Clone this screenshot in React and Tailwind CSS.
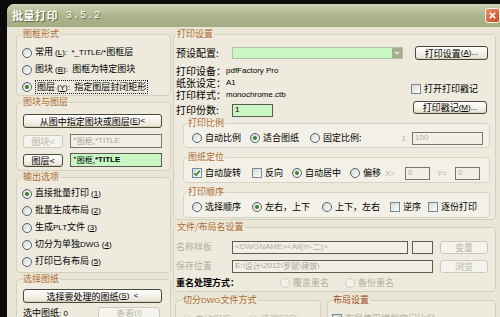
import React from "react";

const L = ({ children, className = "" }) => (
  <span className={`font-['Liberation_Sans',sans-serif] text-[8px] ${className}`}>{children}</span>
);

function Radio({ checked, disabled }) {
  return (
    <span
      className={`flex w-[10px] h-[10px] shrink-0 items-center justify-center rounded-full border ${
        disabled ? "border-[#d3d0c2] bg-[#f3f2ec]" : "border-[#4d6277] bg-gradient-to-br from-[#d6d6cc] to-[#ffffff]"
      }`}
    >
      {checked ? <span className="w-[4px] h-[4px] rounded-full bg-[#3d7f2a]" /> : null}
    </span>
  );
}

function Check({ checked }) {
  return (
    <span className="flex w-[10px] h-[10px] shrink-0 items-center justify-center border border-[#6f8aa3] bg-gradient-to-br from-[#d6d6cc] to-[#ffffff]">
      {checked ? (
        <svg viewBox="0 0 8 8" className="w-[8px] h-[8px]">
          <path d="M1.2 4.2 L3.2 6.2 L6.8 1.8" stroke="#2f7a21" strokeWidth="1.5" fill="none" />
        </svg>
      ) : null}
    </span>
  );
}

function Btn({ children, className = "", disabled }) {
  return (
    <div
      className={`flex items-center justify-center rounded-[3px] border whitespace-nowrap text-[9px] leading-none ${
        disabled
          ? "border-[#cdc9b9] text-[#b8b4a3] bg-[#f4f3ee]"
          : "border-[#4a4838] text-black bg-gradient-to-b from-[#ffffff] to-[#e7e4d3] shadow-[inset_0_-1px_0_#d8d2ba]"
      } ${className}`}
    >
      {children}
    </div>
  );
}

function Box({ children, className = "" }) {
  return (
    <div className={`flex items-center h-[13px] border border-[#5d5b4d] px-[2px] overflow-hidden whitespace-nowrap text-[8px] ${className}`}>
      {children}
    </div>
  );
}

function RadioRow({ checked, disabled, children, className = "" }) {
  return (
    <div className={`flex items-center gap-[3px] whitespace-nowrap ${className}`}>
      <Radio checked={checked} disabled={disabled} />
      <span className={disabled ? "text-[#b4b0a0]" : ""}>{children}</span>
    </div>
  );
}

function CheckRow({ checked, children, className = "" }) {
  return (
    <div className={`flex items-center gap-[3px] whitespace-nowrap ${className}`}>
      <Check checked={checked} />
      <span>{children}</span>
    </div>
  );
}

function TitleBar() {
  return (
    <div className="h-[23px] shrink-0 flex items-center pl-[5px] rounded-tl-[7px] bg-gradient-to-b from-[#cbd1b2] via-[#adb68d] to-[#a2ab82]">
      <span className="text-white text-[11px] font-bold leading-none tracking-[0.5px] [text-shadow:1px_1px_1px_#59623f]">
        批量打印
      </span>
      <span className="ml-[8px] text-white text-[10px] leading-none font-['Liberation_Mono',monospace] tracking-[1px] [text-shadow:1px_1px_1px_#59623f]">
        3.5.2
      </span>
      <div className="ml-auto w-[15px] h-[15px] rounded-[3px] border border-[#f3efe6] bg-gradient-to-br from-[#eb9670] to-[#c4461c] flex items-center justify-center">
        <svg viewBox="0 0 10 10" className="w-[9px] h-[9px]">
          <path d="M2 2 L8 8 M8 2 L2 8" stroke="#ffffff" strokeWidth="1.8" />
        </svg>
      </div>
    </div>
  );
}

const legendCls = "leading-[12px] text-[#ad6b33] px-[1px]";

function LeftCol() {
  return (
    <div className="w-[155px] flex flex-col">
      <fieldset className="min-w-0 h-[68px] border border-[#d3d0be] rounded-[4px] bg-[#eeebde] pl-[5px]">
        <legend className={legendCls}>图框形式</legend>
        <div className="mt-[4px] flex flex-col">
          <RadioRow className="h-[17px]">
            常用 <L>(<u>L</u>):&nbsp; *_TITLE/*</L>图框层
          </RadioRow>
          <RadioRow className="h-[17px]">
            图块 <L>(<u>B</u>):&nbsp;</L> 图框为特定图块
          </RadioRow>
          <div className="flex items-center gap-[3px] h-[17px] whitespace-nowrap">
            <Radio checked />
            <span className="border border-dotted border-[#222] px-[1px] leading-[11px]">
              图层 <L>(<u>Y</u>):&nbsp;</L> 指定图层封闭矩形
            </span>
          </div>
        </div>
      </fieldset>

      <fieldset className="min-w-0 h-[75px] border border-[#d3d0be] rounded-[4px] bg-[#eeebde] pl-[5px]">
        <legend className={legendCls}>图块与图层</legend>
        <Btn className="mt-[6px] ml-[1px] w-[139px] h-[14px]">
          从图中指定图块或图层 <L>(<u>E</u>)&lt;</L>
        </Btn>
        <div className="mt-[6px] ml-[1px] flex items-center h-[14px]">
          <Btn disabled className="w-[40px] h-[13px]">图块&lt;</Btn>
          <Box className="ml-[7px] w-[92px] h-[14px] bg-[#f1efe6] text-[#a9a596] border-[#77766a]">
            *图框, <L>*TITLE</L>
          </Box>
        </div>
        <div className="mt-[5px] ml-[1px] flex items-center h-[14px]">
          <Btn className="w-[40px] h-[13px]">图层&lt;</Btn>
          <Box className="ml-[7px] w-[92px] h-[14px] bg-[#c8f6c4]">
            *图框, <L className="font-bold">*TITLE</L>
          </Box>
        </div>
      </fieldset>

      <fieldset className="min-w-0 h-[102px] border border-[#d3d0be] rounded-[4px] bg-[#eeebde] pl-[5px]">
        <legend className={legendCls}>输出选项</legend>
        <div className="mt-[2px] flex flex-col">
          <RadioRow checked className="h-[17px]">
            直接批量打印 <L>(<u>1</u>)</L>
          </RadioRow>
          <RadioRow className="h-[17px]">
            批量生成布局 <L>(<u>2</u>)</L>
          </RadioRow>
          <RadioRow className="h-[17px]">
            生成<L>PLT</L>文件 <L>(<u>3</u>)</L>
          </RadioRow>
          <RadioRow className="h-[17px]">
            切分为单独<L>DWG (<u>4</u>)</L>
          </RadioRow>
          <RadioRow className="h-[17px]">
            打印已有布局 <L>(<u>5</u>)</L>
          </RadioRow>
        </div>
      </fieldset>

      <fieldset className="min-w-0 h-[50px] border border-[#d3d0be] rounded-[4px] bg-[#eeebde] pl-[5px]">
        <legend className={legendCls}>选择图纸</legend>
        <Btn className="mt-[4px] ml-[1px] w-[139px] h-[14px]">
          选择要处理的图纸 <L>(<u>S</u>)&nbsp; &lt;</L>
        </Btn>
        <div className="mt-[3px] ml-[1px] flex items-center h-[14px]">
          <span className="w-[75px]">
            选中图纸<L>: 0</L>
          </span>
          <Btn disabled className="w-[62px] h-[13px]">
            查看 <L>(I)</L>
          </Btn>
        </div>
      </fieldset>
    </div>
  );
}

function RightCol() {
  return (
    <div className="ml-[2px] w-[323px] flex flex-col">
      <fieldset className="min-w-0 h-[192px] border border-[#d3d0be] rounded-[4px] bg-[#eeebde] pl-[2px]">
        <legend className={legendCls}>打印设置</legend>
        <div className="mt-[6px] flex items-center h-[14px]">
          <span className="w-[56px] text-[10px]">预设配置:</span>
          <div className="w-[171px] h-[12px] bg-[#c9f6c2] border border-[#b2c2a4] flex items-center justify-end">
            <span className="w-[10px] h-[10px] bg-[#a7ae8b] flex items-center justify-center">
              <svg viewBox="0 0 8 8" className="w-[6px] h-[6px]">
                <path d="M1.5 2.5 L4 5 L6.5 2.5" stroke="#ffffff" strokeWidth="1.4" fill="none" />
              </svg>
            </span>
          </div>
          <Btn className="ml-[12px] w-[73px] h-[14px]">
            打印设置 <L>(<u>A</u>)...</L>
          </Btn>
        </div>
        <div className="flex">
          <div className="w-[235px] flex flex-col mt-[5px]">
            <div className="h-[12px] flex items-center text-[10px]">
              打印设备：<L className="text-[8.5px]">pdfFactory Pro</L>
            </div>
            <div className="h-[12px] flex items-center text-[10px]">
              纸张设定：<L className="text-[8.5px]">A1</L>
            </div>
            <div className="h-[12px] flex items-center text-[10px]">
              打印样式：<L className="text-[8.5px]">monochrome.ctb</L>
            </div>
            <div className="mt-[2px] h-[14px] flex items-center">
              <span className="w-[56px] text-[10px]">打印份数:</span>
              <Box className="w-[41px] h-[12px] bg-[#c8f6c4]">
                <L>1</L>
              </Box>
            </div>
          </div>
          <div className="flex flex-col">
            <CheckRow className="mt-[23px] h-[12px]">打开打印戳记</CheckRow>
            <Btn className="mt-[6px] ml-[2px] w-[74px] h-[13px]">
              打印戳记 <L>(<u>M</u>)...</L>
            </Btn>
          </div>
        </div>

        <fieldset className="min-w-0 ml-[7px] w-[307px] h-[31px] border border-[#d6d3c3] rounded-[4px] bg-[#f3f1e7] pl-[3px]">
          <legend className={legendCls}>打印比例</legend>
          <div className="mt-[2px] ml-[5px] flex items-center h-[14px]">
            <RadioRow className="w-[58px]">自动比例</RadioRow>
            <RadioRow checked className="w-[60px]">适合图纸</RadioRow>
            <RadioRow className="w-[88px]">固定比例:</RadioRow>
            <span className="w-[14px] text-right pr-[6px] text-[#b4b0a0]">
              <L>1</L>
            </span>
            <Box className="w-[71px] h-[13px] bg-[#f1efe6] text-[#b4b0a0] border-[#77766a]">
              <L>100</L>
            </Box>
          </div>
        </fieldset>

        <fieldset className="min-w-0 mt-[3px] ml-[7px] w-[307px] h-[32px] border border-[#d6d3c3] rounded-[4px] bg-[#f3f1e7] pl-[3px]">
          <legend className={legendCls}>图纸定位</legend>
          <div className="mt-[3px] ml-[5px] flex items-center h-[14px]">
            <CheckRow checked className="w-[60px]">自动旋转</CheckRow>
            <CheckRow className="w-[40px]">反向</CheckRow>
            <RadioRow checked className="w-[58px]">自动居中</RadioRow>
            <RadioRow className="w-[33px]">偏移</RadioRow>
            <span className="w-[22px] pl-[2px] text-[#b4b0a0]">
              <L>X=</L>
            </span>
            <Box className="w-[25px] h-[13px] bg-[#f1efe6] text-[#b4b0a0] border-[#77766a]">
              <L>0</L>
            </Box>
            <span className="w-[25px] pl-[7px] text-[#b4b0a0]">
              <L>Y=</L>
            </span>
            <Box className="w-[25px] h-[13px] bg-[#f1efe6] text-[#b4b0a0] border-[#77766a]">
              <L>0</L>
            </Box>
          </div>
        </fieldset>

        <fieldset className="min-w-0 mt-[3px] ml-[7px] w-[307px] h-[32px] border border-[#d6d3c3] rounded-[4px] bg-[#f3f1e7] pl-[3px]">
          <legend className={legendCls}>打印顺序</legend>
          <div className="mt-[2px] ml-[5px] flex items-center h-[14px]">
            <RadioRow className="w-[60px]">选择顺序</RadioRow>
            <RadioRow checked className="w-[70px]">左右，上下</RadioRow>
            <RadioRow className="w-[68px]">上下，左右</RadioRow>
            <CheckRow className="w-[38px]">逆序</CheckRow>
            <CheckRow>逐份打印</CheckRow>
          </div>
        </fieldset>
      </fieldset>

      <fieldset className="min-w-0 mt-[1px] h-[71px] border border-[#d3d0be] rounded-[4px] bg-[#eeebde] pl-[2px]">
        <legend className={legendCls}>文件/布局名设置</legend>
        <div className="mt-[7px] flex items-center h-[14px]">
          <span className="w-[56px] text-[#b4b0a0]">名称样板</span>
          <Box className="w-[176px] h-[12px] bg-[#f1efe6] text-[#b4b0a0]">
            <L>&lt;DWGNAME&gt;&lt;All(m-</L>二<L>)&gt;</L>
          </Box>
          <Box className="ml-[4px] w-[21px] h-[13px] bg-[#f1efe6]" />
          <Btn disabled className="ml-[7px] w-[48px] h-[13px]">变量</Btn>
        </div>
        <div className="mt-[5px] flex items-center h-[14px]">
          <span className="w-[56px] text-[#b4b0a0]">保存位置</span>
          <Box className="w-[201px] h-[12px] bg-[#f1efe6] text-[#a9a596]">
            <L>E:\</L>设计<L>\2012\</L>罗斌<L>\</L>建筑<L>\</L>
          </Box>
          <Btn disabled className="ml-[7px] w-[48px] h-[13px]">浏览</Btn>
        </div>
        <div className="mt-[4px] flex items-center h-[12px]">
          <span className="w-[104px] font-bold">重名处理方式：</span>
          <RadioRow disabled className="w-[65px]">覆盖重名</RadioRow>
          <RadioRow disabled>备份重名</RadioRow>
        </div>
      </fieldset>

      <div className="mt-[2px] flex">
        <fieldset className="min-w-0 ml-[2px] w-[147px] h-[40px] border border-[#d3d0be] rounded-[4px] bg-[#eeebde] pl-[6px]">
          <legend className={legendCls}>
            切分<L>DWG</L>文件方式
          </legend>
          <div className="mt-[6px] flex items-center h-[14px]">
            <RadioRow disabled className="w-[66px]">去掉图框</RadioRow>
            <RadioRow disabled>清理图层</RadioRow>
          </div>
        </fieldset>
        <fieldset className="min-w-0 ml-[6px] w-[170px] h-[40px] border border-[#d3d0be] rounded-[4px] bg-[#eeebde] pl-[4px]">
          <legend className="leading-[12px] text-[#9c4f1e] px-[1px]">布局设置</legend>
          <div className="mt-[6px] flex items-center h-[14px]">
            <CheckRow checked>
              <span className="text-[#b4b0a0]">
                布局使用模型空间比例 <L>1:1</L>
              </span>
            </CheckRow>
          </div>
        </fieldset>
      </div>
    </div>
  );
}

export default function App() {
  return (
    <div className="w-[500px] h-[317px] overflow-hidden bg-[#0b0b0b] font-['Noto_Sans_CJK_SC',sans-serif] text-[9px] leading-[12px] text-black">
      <div className="ml-[7px] mt-[4px] w-[493px] h-[313px] rounded-tl-[7px] bg-[#e9e6d5] flex flex-col overflow-hidden">
        <TitleBar />
        <div className="flex pl-[9px] pt-[1px]">
          <LeftCol />
          <RightCol />
        </div>
      </div>
    </div>
  );
}
